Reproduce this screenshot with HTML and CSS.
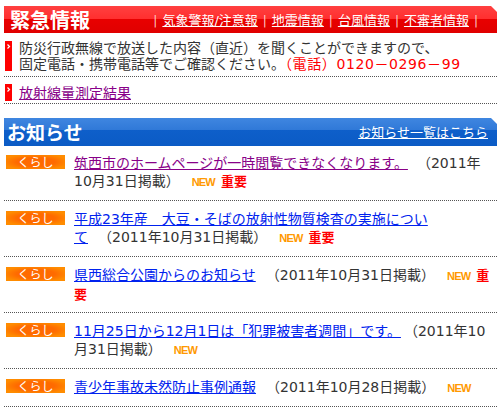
FILE: index.html
```html
<!DOCTYPE html>
<html lang="ja">
<head>
<meta charset="utf-8">
<title>緊急情報</title>
<link rel="stylesheet" href="styles.css">
</head>
<body>
<div class="page">
  <div class="emg-head">
    <h1 class="emg-title">緊急情報</h1>
    <nav class="emg-links">
      <span class="sep">|</span><a href="#">気象警報/注意報</a><span class="sep">|</span><a href="#">地震情報</a><span class="sep">|</span><a href="#">台風情報</a><span class="sep">|</span><a href="#">不審者情報</a><span class="sep">|</span>
    </nav>
  </div>
  <ul class="emg-list">
    <li class="emg-row emg-row-text">
      <span class="marker"><svg width="7" height="7" viewBox="0 0 7 7"><path d="M2.5 1.5 L4.5 3.5 L2.5 5.5" fill="none" stroke="#fff" stroke-width="1.2"/></svg></span>
      <p class="emg-text">防災行政無線で放送した内容（直近）を聞くことができますので、<br>固定電話・携帯電話等でご確認ください。<span class="tel">（電話）0120－0296－99</span></p>
    </li>
    <li class="emg-row emg-row-link">
      <span class="marker"><svg width="7" height="7" viewBox="0 0 7 7"><path d="M2.5 1.5 L4.5 3.5 L2.5 5.5" fill="none" stroke="#fff" stroke-width="1.2"/></svg></span>
      <a href="#" class="visited">放射線量測定結果</a>
    </li>
  </ul>
  <div class="news-head">
    <h2 class="news-title">お知らせ</h2>
    <a href="#" class="news-all">お知らせ一覧はこちら</a>
  </div>
  <ul class="news">
    <li class="news-item news-first">
      <span class="badge">くらし</span>
      <div class="news-body"><a href="#" class="visited">筑西市のホームページが一時閲覧できなくなります。</a><span class="date date-wide">（2011年10月31日掲載）</span><span class="new">NEW</span><span class="imp">重要</span></div>
    </li>
    <li class="news-item">
      <span class="badge">くらし</span>
      <div class="news-body"><a href="#">平成23年産　大豆・そばの放射性物質検査の実施につい<br>て</a><span class="date">（2011年10月31日掲載）</span><span class="new">NEW</span><span class="imp">重要</span></div>
    </li>
    <li class="news-item">
      <span class="badge">くらし</span>
      <div class="news-body"><a href="#">県西総合公園からのお知らせ</a><span class="date">（2011年10月31日掲載）</span><span class="new">NEW</span><span class="imp">重要</span></div>
    </li>
    <li class="news-item">
      <span class="badge">くらし</span>
      <div class="news-body"><a href="#">11月25日から12月1日は「犯罪被害者週間」です。</a><span class="date">（2011年10月31日掲載）</span><span class="new">NEW</span></div>
    </li>
    <li class="news-item">
      <span class="badge">くらし</span>
      <div class="news-body"><a href="#">青少年事故未然防止事例通報</a><span class="date">（2011年10月28日掲載）</span><span class="new">NEW</span></div>
    </li>
  </ul>
</div>
</body>
</html>
```

FILE: styles.css
```css
html, body {
  margin: 0;
  padding: 0;
  background: #fff;
}
body {
  font-family: "DejaVu Sans", "Noto Sans CJK JP", sans-serif;
  color: #333;
  font-size: 14px;
}
.page {
  padding: 6px 6px 0 4px;
}
ul {
  list-style: none;
  margin: 0;
  padding: 0;
}
a {
  color: #0022ee;
  text-decoration: underline;
}
a.visited {
  color: #880088;
}

/* Emergency header */
.emg-head {
  height: 27px;
  display: flex;
  align-items: center;
  justify-content: space-between;
  background: linear-gradient(to bottom, #ff4040 0, #ff2e2e 50%, #e80000 50%, #e00000 100%);
  clip-path: polygon(0 0, calc(100% - 6px) 0, 100% 6px, 100% 100%, 0 100%);
  padding: 0 14px 0 6px;
}
.emg-title {
  margin: 0;
  font-family: "Noto Sans CJK JP", sans-serif;
  font-size: 20px;
  font-weight: bold;
  color: #fff;
  line-height: 27px;
}
.emg-links {
  display: flex;
  align-items: center;
  font-size: 13px;
  line-height: 16px;
  padding-top: 2px;
}
.emg-links a {
  color: #fff;
}
.emg-links .sep {
  color: #ffc8c8;
  padding: 0 5px;
  font-size: 12px;
}

/* Emergency rows */
.emg-list {
  margin-top: 7px;
}
.emg-row {
  display: flex;
  border-bottom: 1px dotted #555;
}
.emg-row-text {
  padding-bottom: 4px;
}
.emg-row-link {
  padding-top: 7px;
  padding-bottom: 1px;
  line-height: 18px;
}
.marker {
  width: 7px;
  flex: none;
  margin: 1px 7px 1px 1px;
  background: #f00;
  display: flex;
  align-items: flex-start;
  padding-top: 2px;
}
.emg-row-link .marker {
  margin-top: 0;
  margin-bottom: 1px;
}
.emg-text {
  margin: 0;
  line-height: 16px;
}
.tel {
  color: #ff0000;
  letter-spacing: 0.6px;
}

/* News header */
.news-head {
  margin-top: 14px;
  height: 28px;
  display: flex;
  align-items: center;
  justify-content: space-between;
  background: linear-gradient(to bottom, #3f86e0 0, #3079d8 42%, #0e5fca 42%, #0b5bc5 100%);
  clip-path: polygon(0 0, calc(100% - 6px) 0, 100% 6px, 100% 100%, 0 100%);
  padding: 0 9px 0 3px;
}
.news-title {
  margin: 0;
  font-family: "Noto Sans CJK JP", sans-serif;
  font-size: 19px;
  font-weight: bold;
  color: #fff;
  line-height: 28px;
}
.news-all {
  color: #fff;
  font-size: 13px;
  line-height: 16px;
  padding-top: 2px;
}

/* News items */
.news-item {
  display: flex;
  align-items: flex-start;
  padding: 9px 0 9px;
  border-bottom: 1px dotted #555;
}
.news-first {
  padding-top: 8px;
}
.badge {
  flex: none;
  width: 59px;
  height: 14px;
  margin: 1px 9px 0 2px;
  background: radial-gradient(ellipse at center, #ff6a00 0, #ff6a00 45%, #ff8c00 80%);
  color: #fff;
  font-family: "Noto Sans CJK JP", sans-serif;
  font-size: 12px;
  line-height: 14px;
  text-align: center;
}
.news-body {
  flex: 1;
  line-height: 18px;
}
.date {
  margin-left: 10px;
}
.date-wide {
  margin-left: 16px;
}
.new {
  display: inline-block;
  margin: 0 6px 0 12px;
  font-family: "Liberation Sans", Arial, sans-serif;
  font-weight: bold;
  font-size: 11px;
  line-height: 18px;
  letter-spacing: -0.8px;
  color: #ff9900;
}
.imp {
  font-family: "Noto Sans CJK JP", sans-serif;
  font-weight: bold;
  font-size: 13px;
  line-height: 18px;
  color: #ff0000;
}
```
